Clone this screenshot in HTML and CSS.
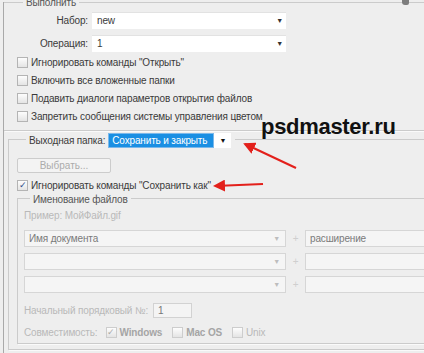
FILE: index.html
```html
<!DOCTYPE html>
<html lang="ru">
<head>
    <meta charset="UTF-8">
    <title>Пакетная обработка</title>
    <link rel="stylesheet" href="styles.css">
</head>
<body>
    <div class="dialog">
        <div class="group run">
            <div class="legend">Выполнить</div>
            <div class="field-row first">
                <span class="field-label">Набор:</span>
                <div class="select">new<span class="caret">&#9660;</span></div>
            </div>
            <div class="field-row second">
                <span class="field-label">Операция:</span>
                <div class="select">1<span class="caret">&#9660;</span></div>
            </div>
            <div class="checks">
                <label class="check"><span class="box"></span>Игнорировать команды "Открыть"</label>
                <label class="check"><span class="box"></span>Включить все вложенные папки</label>
                <label class="check"><span class="box"></span>Подавить диалоги параметров открытия файлов</label>
                <label class="check"><span class="box"></span>Запретить сообщения системы управления цветом</label>
            </div>
        </div>

        <div class="group output">
            <div class="legend dest">
                <span>Выходная папка:</span>
                <div class="dest-select">
                    <span class="dest-value">Сохранить и закрыть</span>
                    <span class="dest-caret">&#9660;</span>
                </div>
            </div>
            <button class="choose" disabled>Выбрать...</button>
            <label class="check save-as"><span class="box on">&#10003;</span>Игнорировать команды "Сохранить как"</label>

            <div class="group naming">
                <div class="legend">Именование файлов</div>
                <p class="example">Пример: МойФайл.gif</p>
                <div class="name-row">
                    <div class="name-select dark">Имя документа<span class="caret light">&#9660;</span></div>
                    <span class="plus">+</span>
                    <div class="name-input dark">расширение</div>
                </div>
                <div class="name-row">
                    <div class="name-select"><span class="caret light">&#9660;</span></div>
                    <span class="plus">+</span>
                    <div class="name-input"></div>
                </div>
                <div class="name-row">
                    <div class="name-select"><span class="caret light">&#9660;</span></div>
                    <span class="plus">+</span>
                    <div class="name-input"></div>
                </div>
                <div class="serial-row">
                    <span>Начальный порядковый №:</span>
                    <div class="serial">1</div>
                </div>
                <div class="compat-row">
                    <span>Совместимость:</span>
                    <label class="check off"><span class="box on">&#10003;</span><b>Windows</b></label>
                    <label class="check off"><span class="box"></span><b>Mac OS</b></label>
                    <label class="check off"><span class="box"></span>Unix</label>
                </div>
            </div>
        </div>
    </div>

    <div class="corner-mark"></div>
    <div class="watermark">psdmaster.ru</div>
    <svg class="arrows" width="424" height="353" viewBox="0 0 424 353">
        <defs>
            <marker id="head" markerWidth="6" markerHeight="6" refX="5" refY="3" orient="auto" markerUnits="strokeWidth">
                <path d="M0,0 L6,3 L0,6 Z" fill="#e3201b"/>
            </marker>
        </defs>
        <line x1="296" y1="168" x2="245" y2="144" stroke="#e3201b" stroke-width="2" marker-end="url(#head)"/>
        <line x1="263" y1="184" x2="215" y2="186" stroke="#e3201b" stroke-width="2" marker-end="url(#head)"/>
    </svg>
</body>
</html>
```

FILE: styles.css
```css
body {
    margin: 0;
    background-color: #eeeeee;
    font-family: "Liberation Sans", Arial, sans-serif;
    font-size: 10px;
    letter-spacing: -0.15px;
    color: #3a3a3a;
    width: 424px;
    height: 353px;
    overflow: hidden;
    position: relative;
}

.dialog {
    margin-left: 3px;
    height: 353px;
    border-left: 1px solid #a9a9a9;
}

.group {
    border: 1px solid #cbcbcb;
    width: 470px;
    box-shadow: 1px 1px 0 #fafafa;
}

.legend {
    display: flex;
    align-items: center;
    width: max-content;
    height: 14px;
    padding: 0 3px;
    background-color: #eeeeee;
    color: #555;
}

/* первая группа */
.run {
    margin-top: 2px;
    border-left: none;
    padding-bottom: 5px;
}

.run > .legend {
    margin: -8px 0 0 19px;
}

.field-row {
    display: flex;
    align-items: center;
    height: 16px;
}

.field-row.first {
    margin-top: 3px;
}

.field-row.second {
    margin-top: 7px;
}

.field-label {
    width: 84px;
    text-align: right;
    margin-right: 4px;
}

.select {
    position: relative;
    width: 189px;
    height: 16px;
    line-height: 16px;
    padding-left: 5px;
    background-color: #fff;
    border-top: 1px solid #e2e2e2;
}

.caret {
    position: absolute;
    right: 3px;
    top: 0;
    font-size: 7px;
    color: #333;
}

.caret.light {
    color: #bdbdbd;
}

.checks {
    margin-top: 2px;
    padding-left: 13px;
}

.check {
    display: flex;
    align-items: center;
    height: 18px;
}

.box {
    width: 9px;
    height: 9px;
    border: 1px solid #b4b4b4;
    background: linear-gradient(#fdfdfd, #e4e4e4);
    margin-right: 3px;
    font-size: 9px;
    line-height: 9px;
    text-align: center;
    color: #2d4a8a;
    flex-shrink: 0;
}

/* выходная папка */
.output {
    margin: 8px 0 0 4px;
    padding-bottom: 5px;
}

.legend.dest {
    height: 16px;
    margin: -8px 0 0 17px;
    padding: 0 4px 0 3px;
    color: #3a3a3a;
}

.dest-select {
    display: flex;
    margin-left: 3px;
    height: 15px;
}

.dest-value {
    background-color: #1a8fe3;
    color: #fff;
    padding: 0 6px 0 3px;
    line-height: 13px;
    border: 1px solid #7bb8ea;
}

.dest-caret {
    width: 17px;
    background-color: #fff;
    text-align: center;
    font-size: 7px;
    line-height: 15px;
    color: #111;
}

.choose {
    display: block;
    margin: 10px 0 0 8px;
    width: 94px;
    height: 15px;
    padding: 0;
    font: inherit;
    color: #ababab;
    background-color: #f3f3f3;
    border: 1px solid #cccccc;
    border-radius: 2px;
}

.check.save-as {
    margin: 5px 0 0 8px;
    height: 14px;
}

/* именование файлов */
.naming {
    margin: 6px 0 0 8px;
    padding-bottom: 4px;
    color: #b9b9b9;
}

.naming > .legend {
    margin: -7px 0 0 12px;
    color: #555;
}

.example {
    margin: 3px 0 0 6px;
    line-height: 14px;
}

.name-row {
    display: flex;
    align-items: center;
    margin: 7px 0 0 6px;
    height: 17px;
}

.name-row + .name-row {
    margin-top: 6px;
}

.name-select,
.name-input {
    position: relative;
    height: 15px;
    line-height: 15px;
    padding-left: 4px;
    background-color: #f5f5f5;
    border: 1px solid #d6d6d6;
}

.name-select {
    width: 256px;
}

.name-input {
    width: 150px;
}

.dark {
    color: #7a7a7a;
}

.name-select .caret {
    right: 5px;
}

.plus {
    width: 19px;
    text-align: center;
    color: #cfcfcf;
}

.serial-row {
    display: flex;
    align-items: center;
    margin: 10px 0 0 6px;
    height: 15px;
}

.serial {
    width: 33px;
    height: 13px;
    line-height: 13px;
    margin-left: 5px;
    padding-left: 4px;
    color: #777;
    border: 1px solid #d2d2d2;
    background-color: #f4f4f4;
}

.compat-row {
    display: flex;
    align-items: center;
    margin: 7px 0 0 6px;
    height: 14px;
}

.compat-row .check {
    margin-left: 8px;
}

.check.off .box {
    border-color: #cdcdcd;
    color: #aaa;
}

.check.off b {
    color: #a5a5a5;
    font-weight: bold;
    margin-right: 2px;
}

/* поверх скриншота */
.corner-mark {
    position: absolute;
    left: 402px;
    top: 0;
    width: 7px;
    height: 5px;
    background-color: #7d7d7d;
    border-radius: 0 0 2px 3px;
}

.watermark {
    position: absolute;
    left: 261px;
    top: 114px;
    font-family: "Liberation Sans", Arial, sans-serif;
    font-weight: bold;
    font-size: 22px;
    color: #111;
    letter-spacing: -0.3px;
}

.arrows {
    position: absolute;
    left: 0;
    top: 0;
    pointer-events: none;
}
```
